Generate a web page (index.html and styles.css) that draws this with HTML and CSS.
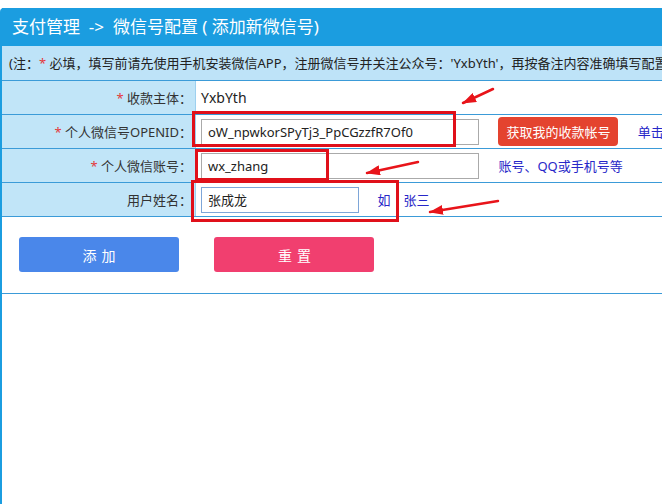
FILE: index.html
```html
<!DOCTYPE html>
<html lang="zh-CN">
<head>
    <meta charset="UTF-8">
    <meta name="viewport" content="width=device-width, initial-scale=1.0">
    <title>微信号配置</title>
    <link rel="stylesheet" href="styles.css">
</head>
<body>
    <div class="panel">
        <!-- 标题 -->
        <div class="panel-head">支付管理&nbsp;&nbsp;-&gt;&nbsp;&nbsp;微信号配置&nbsp;(&nbsp;添加新微信号)</div>

        <!-- 说明 -->
        <div class="notice">(注：<span class="req">*</span> 必填，填写前请先使用手机安装微信APP，注册微信号并关注公众号：'YxbYth'，再按备注内容准确填写配置信息)</div>

        <!-- 表单 -->
        <table class="form-table">
            <tr>
                <td class="label"><span class="req">*</span> 收款主体：</td>
                <td class="value"><span class="static">YxbYth</span></td>
            </tr>
            <tr>
                <td class="label"><span class="req">*</span> 个人微信号OPENID：</td>
                <td class="value">
                    <input type="text" class="field" value="oW_npwkorSPyTj3_PpCGzzfR7Of0">
                    <button class="btn-get">获取我的收款帐号</button>
                    <span class="tip">单击按钮获取</span>
                </td>
            </tr>
            <tr>
                <td class="label"><span class="req">*</span> 个人微信账号：</td>
                <td class="value">
                    <input type="text" class="field" value="wx_zhang">
                    <span class="tip">账号、QQ或手机号等</span>
                </td>
            </tr>
            <tr>
                <td class="label">用户姓名：</td>
                <td class="value">
                    <input type="text" class="field field-short" value="张成龙">
                    <span class="tip tip-eg">如</span><span class="tip">张三</span>
                </td>
            </tr>
        </table>

        <!-- 按钮 -->
        <div class="actions">
            <button class="btn btn-add">添加</button>
            <button class="btn btn-reset">重置</button>
        </div>
    </div>

    <!-- 截图标注 -->
    <svg class="marks" width="662" height="504" viewBox="0 0 662 504">
        <defs>
            <marker id="head" markerUnits="userSpaceOnUse" markerWidth="14" markerHeight="10" refX="13" refY="5" orient="auto">
                <path d="M0,0 L14,5 L0,10 z" fill="#e8141a"/>
            </marker>
        </defs>
        <g fill="none" stroke="#e0101a" stroke-width="3">
            <rect x="193.5" y="112.5" width="261" height="33"/>
            <rect x="196.5" y="150.5" width="131" height="29"/>
            <rect x="192.5" y="181.5" width="205" height="39"/>
        </g>
        <g stroke="#e8141a" stroke-width="2.5" stroke-linecap="round">
            <line x1="493" y1="89" x2="463" y2="103" marker-end="url(#head)"/>
            <line x1="418" y1="162" x2="367" y2="173" marker-end="url(#head)"/>
            <line x1="498" y1="201" x2="430" y2="212" marker-end="url(#head)"/>
        </g>
    </svg>
</body>
</html>
```

FILE: styles.css
```css
html, body {
    margin: 0;
    padding: 0;
}
body {
    position: relative;
    width: 662px;
    height: 504px;
    overflow: hidden;
    padding-top: 8px;
    box-sizing: border-box;
    font-family: "Noto Sans", "Noto Sans CJK SC", sans-serif;
    font-size: 13px;
    color: #333;
    background-color: #fff;
}
.panel {
    width: 760px;
    height: 496px;
    border-left: 2px solid #1b9de0;
    border-top-left-radius: 4px;
}
.panel-head {
    height: 38px;
    line-height: 38px;
    padding-left: 10px;
    background-color: #1b9de0;
    color: #fff;
    font-size: 17px;
    white-space: nowrap;
}
.notice {
    height: 34px;
    line-height: 34px;
    padding-left: 7px;
    background-color: #bee3f8;
    border-bottom: 1px solid #3b9bd8;
    white-space: nowrap;
    color: #222;
}
.req {
    color: #e4393c;
}
.form-table {
    width: 100%;
    border-collapse: collapse;
}
.form-table td {
    height: 33px;
    padding: 0;
    border-bottom: 1px solid #3b9bd8;
    white-space: nowrap;
}
.label {
    width: 190px;
    padding-right: 3px !important;
    text-align: right;
    background-color: #c1e5f8;
    border-right: 1px solid #9dd0ef;
}
.value {
    padding-left: 5px !important;
}
.static {
    font-size: 14px;
    color: #222;
}
.field {
    box-sizing: border-box;
    width: 278px;
    height: 26px;
    padding: 0 6px;
    border: 1px solid #aaa;
    font-family: inherit;
    font-size: 13px;
    color: #222;
    vertical-align: middle;
}
.field-short {
    width: 158px;
    border-color: #7ea6d8;
}
.btn-get {
    height: 29px;
    width: 120px;
    margin-left: 16px;
    border: none;
    border-radius: 4px;
    background-color: #e4432f;
    color: #fff;
    font-family: inherit;
    font-size: 13px;
    vertical-align: middle;
}
.tip {
    margin-left: 16px;
    color: #2727c8;
    font-size: 13px;
    vertical-align: middle;
}
.tip-eg {
    margin-left: 15px;
    margin-right: -3px;
}
.actions {
    height: 77px;
    padding: 20px 0 0 17px;
    box-sizing: border-box;
    border-bottom: 1px solid #3b9bd8;
}
.btn {
    width: 160px;
    height: 35px;
    margin-right: 32px;
    border: none;
    border-radius: 3px;
    color: #fff;
    font-family: inherit;
    font-size: 14px;
    letter-spacing: 5px;
    text-indent: 5px;
}
.btn-add {
    background-color: #4a87ea;
}
.btn-reset {
    background-color: #f13f6f;
}
.marks {
    position: absolute;
    top: 0;
    left: 0;
    pointer-events: none;
}
```
